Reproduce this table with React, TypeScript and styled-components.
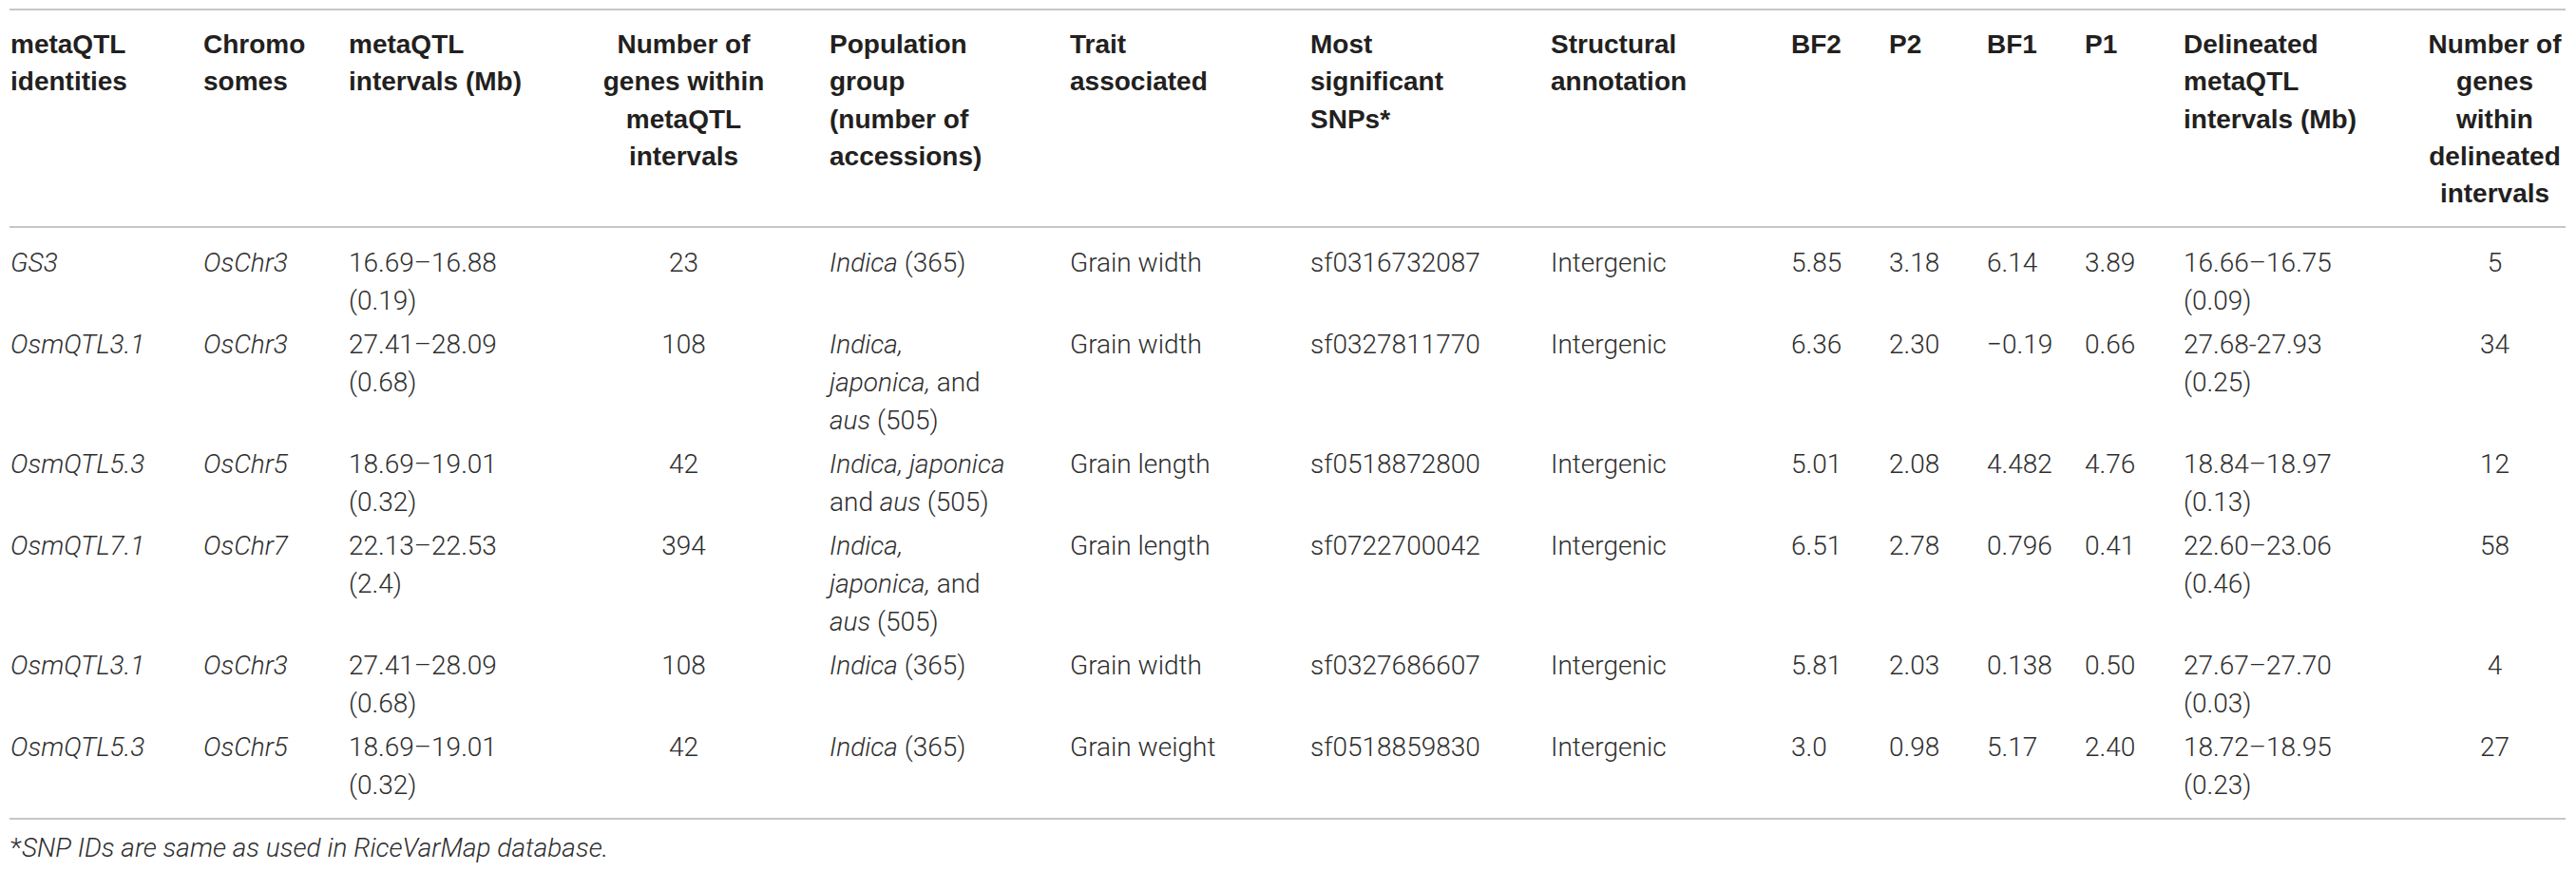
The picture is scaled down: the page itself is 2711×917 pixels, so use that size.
import React from "react";
import styled, { createGlobalStyle } from "styled-components";

const GlobalStyle = createGlobalStyle`
  html, body { margin: 0; padding: 0; background: #ffffff; }
  body { font-family: "Liberation Sans", Arial, Helvetica, sans-serif; }
`;

const COLS =
  "203px 153px 200px 306px 253px 253px 253px 253px 103px 103px 103px 104px 253px 150px";

const BODY_FONT = `Roboto, "Liberation Sans", Arial, sans-serif`;

const Page = styled.div`
  padding: 9px 0 0 10px;
  width: 2690px;
`;

const Table = styled.div`
  width: 2690px;
  border-top: 2px solid #c6c6c6;
`;

const HeadRow = styled.div`
  display: grid;
  grid-template-columns: ${COLS};
  padding: 16px 0 14.75px;
  border-bottom: 2px solid #c6c6c6;
`;

const HeadCell = styled.div<{ $center?: boolean }>`
  padding-left: 1px;
  font-family: "Liberation Sans", Arial, sans-serif;
  font-size: 28px;
  line-height: 39.25px;
  font-weight: 700;
  color: #231f20;
  white-space: nowrap;
  text-align: ${(p) => (p.$center ? "center" : "left")};
`;

const Body = styled.div`
  padding: 14px 0 11px;
  border-bottom: 2px solid #c6c6c6;
`;

const Row = styled.div`
  display: grid;
  grid-template-columns: ${COLS};
  padding: 3px 0;
`;

const Cell = styled.div<{ $center?: boolean }>`
  padding-left: 1px;
  font-family: ${BODY_FONT};
  font-size: 28px;
  line-height: 40px;
  font-weight: 300;
  color: #2e2e2e;
  white-space: nowrap;
  text-align: ${(p) => (p.$center ? "center" : "left")};
`;

const Em = styled.i`
  font-style: italic;
`;

const Footnote = styled.div`
  margin-top: 10px;
  padding-left: 1px;
  font-family: ${BODY_FONT};
  font-size: 28px;
  line-height: 40px;
  font-weight: 300;
  color: #2e2e2e;
  white-space: nowrap;
`;

type RowData = {
  id: string;
  chr: string;
  interval: [string, string];
  genes: string;
  pop: React.ReactNode;
  trait: string;
  snp: string;
  annot: string;
  bf2: string;
  p2: string;
  bf1: string;
  p1: string;
  delin: [string, string];
  dgenes: string;
};

const rows: RowData[] = [
  {
    id: "GS3",
    chr: "OsChr3",
    interval: ["16.69–16.88", "(0.19)"],
    genes: "23",
    pop: (
      <>
        <Em>Indica</Em> (365)
      </>
    ),
    trait: "Grain width",
    snp: "sf0316732087",
    annot: "Intergenic",
    bf2: "5.85",
    p2: "3.18",
    bf1: "6.14",
    p1: "3.89",
    delin: ["16.66–16.75", "(0.09)"],
    dgenes: "5",
  },
  {
    id: "OsmQTL3.1",
    chr: "OsChr3",
    interval: ["27.41–28.09", "(0.68)"],
    genes: "108",
    pop: (
      <>
        <Em>Indica,</Em>
        <br />
        <Em>japonica,</Em> and
        <br />
        <Em>aus</Em> (505)
      </>
    ),
    trait: "Grain width",
    snp: "sf0327811770",
    annot: "Intergenic",
    bf2: "6.36",
    p2: "2.30",
    bf1: "−0.19",
    p1: "0.66",
    delin: ["27.68-27.93", "(0.25)"],
    dgenes: "34",
  },
  {
    id: "OsmQTL5.3",
    chr: "OsChr5",
    interval: ["18.69–19.01", "(0.32)"],
    genes: "42",
    pop: (
      <>
        <Em>Indica, japonica</Em>
        <br />
        and <Em>aus</Em> (505)
      </>
    ),
    trait: "Grain length",
    snp: "sf0518872800",
    annot: "Intergenic",
    bf2: "5.01",
    p2: "2.08",
    bf1: "4.482",
    p1: "4.76",
    delin: ["18.84–18.97", "(0.13)"],
    dgenes: "12",
  },
  {
    id: "OsmQTL7.1",
    chr: "OsChr7",
    interval: ["22.13–22.53", "(2.4)"],
    genes: "394",
    pop: (
      <>
        <Em>Indica,</Em>
        <br />
        <Em>japonica,</Em> and
        <br />
        <Em>aus</Em> (505)
      </>
    ),
    trait: "Grain length",
    snp: "sf0722700042",
    annot: "Intergenic",
    bf2: "6.51",
    p2: "2.78",
    bf1: "0.796",
    p1: "0.41",
    delin: ["22.60–23.06", "(0.46)"],
    dgenes: "58",
  },
  {
    id: "OsmQTL3.1",
    chr: "OsChr3",
    interval: ["27.41–28.09", "(0.68)"],
    genes: "108",
    pop: (
      <>
        <Em>Indica</Em> (365)
      </>
    ),
    trait: "Grain width",
    snp: "sf0327686607",
    annot: "Intergenic",
    bf2: "5.81",
    p2: "2.03",
    bf1: "0.138",
    p1: "0.50",
    delin: ["27.67–27.70", "(0.03)"],
    dgenes: "4",
  },
  {
    id: "OsmQTL5.3",
    chr: "OsChr5",
    interval: ["18.69–19.01", "(0.32)"],
    genes: "42",
    pop: (
      <>
        <Em>Indica</Em> (365)
      </>
    ),
    trait: "Grain weight",
    snp: "sf0518859830",
    annot: "Intergenic",
    bf2: "3.0",
    p2: "0.98",
    bf1: "5.17",
    p1: "2.40",
    delin: ["18.72–18.95", "(0.23)"],
    dgenes: "27",
  },
];

const headers: { lines: string[]; center?: boolean }[] = [
  { lines: ["metaQTL", "identities"] },
  { lines: ["Chromo", "somes"] },
  { lines: ["metaQTL", "intervals (Mb)"] },
  { lines: ["Number of", "genes within", "metaQTL", "intervals"], center: true },
  { lines: ["Population", "group", "(number of", "accessions)"] },
  { lines: ["Trait", "associated"] },
  { lines: ["Most", "significant", "SNPs*"] },
  { lines: ["Structural", "annotation"] },
  { lines: ["BF2"] },
  { lines: ["P2"] },
  { lines: ["BF1"] },
  { lines: ["P1"] },
  { lines: ["Delineated", "metaQTL", "intervals (Mb)"] },
  { lines: ["Number of", "genes", "within", "delineated", "intervals"], center: true },
];

const Lines: React.FC<{ lines: string[] }> = ({ lines }) => (
  <>
    {lines.map((l, i) => (
      <React.Fragment key={i}>
        {i > 0 && <br />}
        {l}
      </React.Fragment>
    ))}
  </>
);

export default function App() {
  return (
    <>
      <GlobalStyle />
      <Page>
        <Table>
          <HeadRow>
            {headers.map((h, i) => (
              <HeadCell key={i} $center={h.center}>
                <Lines lines={h.lines} />
              </HeadCell>
            ))}
          </HeadRow>
          <Body>
            {rows.map((r, i) => (
              <Row key={i}>
                <Cell>
                  <Em>{r.id}</Em>
                </Cell>
                <Cell>
                  <Em>{r.chr}</Em>
                </Cell>
                <Cell>
                  <Lines lines={r.interval} />
                </Cell>
                <Cell $center>{r.genes}</Cell>
                <Cell>{r.pop}</Cell>
                <Cell>{r.trait}</Cell>
                <Cell>{r.snp}</Cell>
                <Cell>{r.annot}</Cell>
                <Cell>{r.bf2}</Cell>
                <Cell>{r.p2}</Cell>
                <Cell>{r.bf1}</Cell>
                <Cell>{r.p1}</Cell>
                <Cell>
                  <Lines lines={r.delin} />
                </Cell>
                <Cell $center>{r.dgenes}</Cell>
              </Row>
            ))}
          </Body>
        </Table>
        <Footnote>
          *<Em>SNP IDs are same as used in RiceVarMap database.</Em>
        </Footnote>
      </Page>
    </>
  );
}
